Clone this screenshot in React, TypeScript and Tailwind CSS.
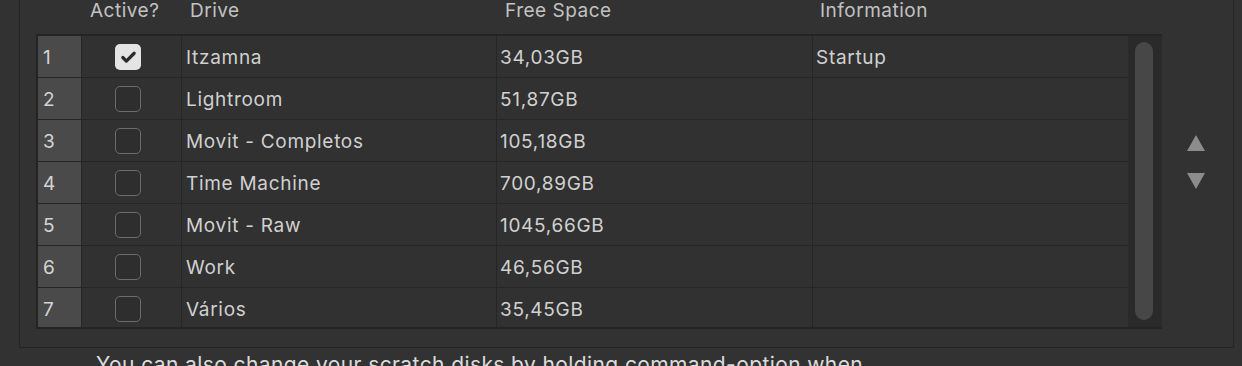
import { Check } from "lucide-react";

const drives = [
  { name: "Itzamna", free: "34,03GB", info: "Startup", active: true },
  { name: "Lightroom", free: "51,87GB", info: "", active: false },
  { name: "Movit - Completos", free: "105,18GB", info: "", active: false },
  { name: "Time Machine", free: "700,89GB", info: "", active: false },
  { name: "Movit - Raw", free: "1045,66GB", info: "", active: false },
  { name: "Work", free: "46,56GB", info: "", active: false },
  { name: "Vários", free: "35,45GB", info: "", active: false },
];

function Checkbox({ checked }: { checked: boolean }) {
  if (checked) {
    return (
      <div className="w-[26px] h-[26px] rounded-[5px] bg-[#e4e4e4] flex items-center justify-center">
        <Check className="w-[17px] h-[17px] text-[#2a2a2a]" strokeWidth={4.5} />
      </div>
    );
  }
  return (
    <div className="w-[26px] h-[26px] rounded-[5px] border-[1.5px] border-[#6c6c6c] bg-[#2e2e2e]" />
  );
}

export default function App() {
  return (
    <div
      className="w-[1242px] h-[366px] overflow-hidden bg-[#323232] text-[#cfcfcf]"
      style={{ fontFamily: "Inter, 'Liberation Sans', sans-serif" }}
    >
      {/* group panel */}
      <div className="ml-[19px] w-[1215px] h-[348px] border-l border-r border-b border-[#242424] pl-[16px]">
        {/* column headers */}
        <div className="flex h-[34px] pt-[1px] text-[19px] text-[#c2c2c2] tracking-[0.5px] leading-[20px]">
          <div className="w-[46px]" />
          <div className="w-[100px] pl-[8px]">Active?</div>
          <div className="w-[315px] pl-[8px]">Drive</div>
          <div className="w-[316px] pl-[8px]">Free Space</div>
          <div className="w-[316px] pl-[7px]">Information</div>
        </div>

        <div className="flex">
          {/* table */}
          <div className="flex w-[1126px] h-[295px] bg-[#242424] pt-[2px] pl-[2px] pb-[2px]">
            <div className="flex-1 h-full overflow-hidden">
              {drives.map((d, i) => (
                <div
                  key={d.name}
                  className="flex h-[42px] border-b border-[#262626] text-[19px] tracking-[0.7px] leading-[22px] text-[#d0d0d0]"
                >
                  <div className="w-[43px] bg-[#4a4a4a] pl-[5px] pt-[3px] flex items-center text-[#d4d4d4]">
                    {i + 1}
                  </div>
                  <div className="w-[100px] border-l border-[#262626] bg-[#313131] flex items-center pl-[33px] pt-[1px]">
                    <Checkbox checked={d.active} />
                  </div>
                  <div className="w-[315px] border-l border-[#262626] bg-[#313131] pl-[4px] pt-[3px] flex items-center">
                    {d.name}
                  </div>
                  <div className="w-[316px] border-l border-[#262626] bg-[#313131] pl-[3px] pt-[3px] flex items-center">
                    {d.free}
                  </div>
                  <div className="flex-1 border-l border-[#262626] bg-[#313131] pl-[3px] pt-[3px] flex items-center">
                    {d.info}
                  </div>
                </div>
              ))}
            </div>
            {/* scroll bar */}
            <div className="w-[34px] h-full bg-[#2a2a2a] pl-[7px] pt-[6px] pb-[7px]">
              <div className="w-[18px] h-full rounded-full bg-[#474747]" />
            </div>
          </div>

          {/* reorder arrows */}
          <div className="flex-1 flex flex-col items-center pt-[101px] gap-[22px] pr-[4px]">
            <svg width="18" height="16" viewBox="0 0 18 16">
              <polygon points="9,0 18,16 0,16" fill="#8c8c8c" />
            </svg>
            <svg width="18" height="16" viewBox="0 0 18 16">
              <polygon points="0,0 18,0 9,16" fill="#8c8c8c" />
            </svg>
          </div>
        </div>
      </div>

      <div className="pl-[96px] pt-[4px] text-[21px] leading-[26px] text-[#dcdcdc] tracking-[0.4px] whitespace-nowrap">
        You can also change your scratch disks by holding command-option when
      </div>
    </div>
  );
}
